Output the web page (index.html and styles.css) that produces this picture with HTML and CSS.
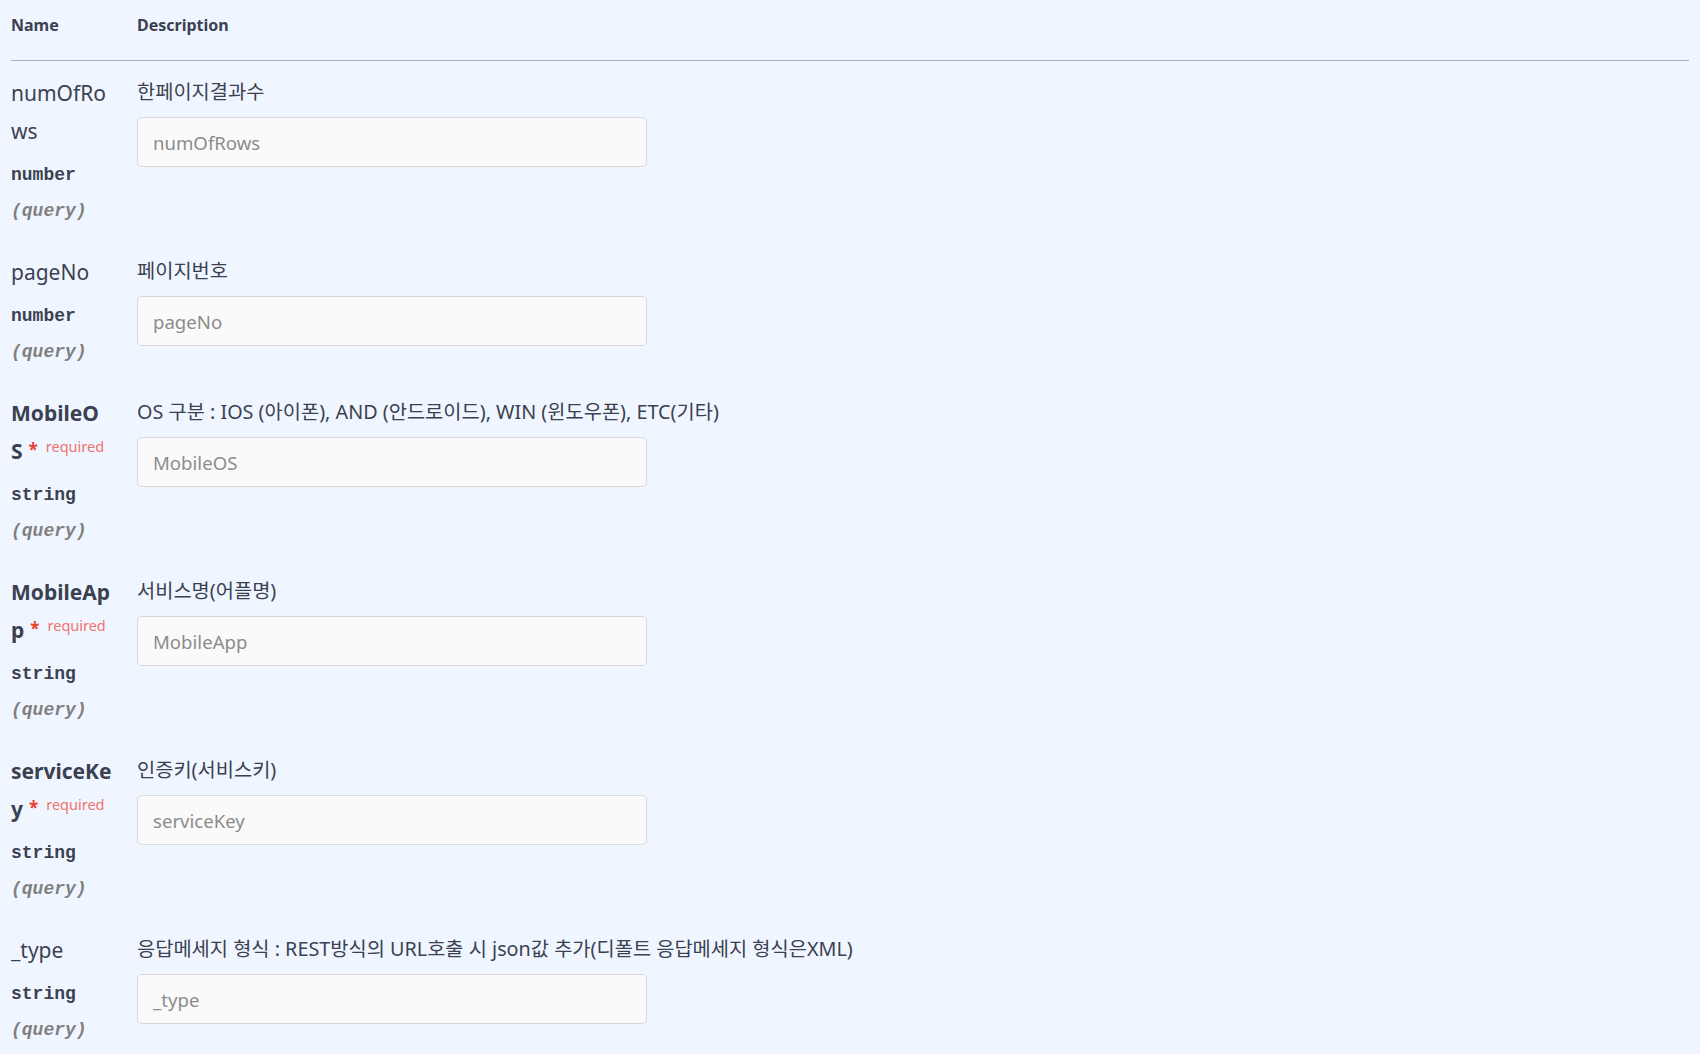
FILE: index.html
```html
<!DOCTYPE html>
<html lang="ko">
<head>
<meta charset="UTF-8">
<meta name="viewport" content="width=device-width, initial-scale=1.0">
<title>Parameters</title>
<link rel="stylesheet" href="styles.css">
</head>
<body>
<div class="parameters">
    <div class="param-head">
        <div class="col-name">Name</div>
        <div class="col-desc">Description</div>
    </div>

    <div class="param-row">
        <div class="col-name">
            <div class="param-name">numOfRo<br>ws</div>
            <div class="param-type">number</div>
            <div class="param-in">(query)</div>
        </div>
        <div class="col-desc">
            <p class="param-desc">한페이지결과수</p>
            <input type="text" class="param-input" placeholder="numOfRows">
        </div>
    </div>

    <div class="param-row">
        <div class="col-name">
            <div class="param-name">pageNo</div>
            <div class="param-type">number</div>
            <div class="param-in">(query)</div>
        </div>
        <div class="col-desc">
            <p class="param-desc">페이지번호</p>
            <input type="text" class="param-input" placeholder="pageNo">
        </div>
    </div>

    <div class="param-row">
        <div class="col-name">
            <div class="param-name required">MobileO<br>S<span class="req-star">*</span><span class="req-label">required</span></div>
            <div class="param-type">string</div>
            <div class="param-in">(query)</div>
        </div>
        <div class="col-desc">
            <p class="param-desc">OS 구분 : IOS (아이폰), AND (안드로이드), WIN (윈도우폰), ETC(기타)</p>
            <input type="text" class="param-input" placeholder="MobileOS">
        </div>
    </div>

    <div class="param-row">
        <div class="col-name">
            <div class="param-name required">MobileAp<br>p<span class="req-star">*</span><span class="req-label">required</span></div>
            <div class="param-type">string</div>
            <div class="param-in">(query)</div>
        </div>
        <div class="col-desc">
            <p class="param-desc">서비스명(어플명)</p>
            <input type="text" class="param-input" placeholder="MobileApp">
        </div>
    </div>

    <div class="param-row">
        <div class="col-name">
            <div class="param-name required">serviceKe<br>y<span class="req-star">*</span><span class="req-label">required</span></div>
            <div class="param-type">string</div>
            <div class="param-in">(query)</div>
        </div>
        <div class="col-desc">
            <p class="param-desc">인증키(서비스키)</p>
            <input type="text" class="param-input" placeholder="serviceKey">
        </div>
    </div>

    <div class="param-row">
        <div class="col-name">
            <div class="param-name">_type</div>
            <div class="param-type">string</div>
            <div class="param-in">(query)</div>
        </div>
        <div class="col-desc">
            <p class="param-desc">응답메세지 형식 : REST방식의 URL호출 시 json값 추가(디폴트 응답메세지 형식은XML)</p>
            <input type="text" class="param-input" placeholder="_type">
        </div>
    </div>
</div>
</body>
</html>
```

FILE: styles.css
```css
body {
    margin: 0;
    background: #f0f6ff;
    color: #3b4151;
    font-family: "Noto Sans", "Noto Sans CJK KR", sans-serif;
}
.parameters {
    padding: 0 11px;
}
.param-head {
    display: grid;
    grid-template-columns: 126px 1fr;
    padding: 15px 0 25px;
    border-bottom: 1px solid #adb0b8;
    font-size: 16px;
    font-weight: 700;
    line-height: 20px;
}
.param-row {
    display: grid;
    grid-template-columns: 126px 1fr;
    padding: 13px 0 14px;
}
.param-name {
    font-size: 21px;
    line-height: 38px;
}
.param-name.required {
    font-weight: 700;
}
.req-star {
    margin-left: 6px;
    color: #e8412c;
    font-size: 17px;
    line-height: 1;
    vertical-align: 3px;
}
.req-label {
    margin-left: 8px;
    color: #f0736a;
    font-size: 14.5px;
    font-weight: 400;
    line-height: 1;
    vertical-align: 7px;
}
.param-type {
    padding: 10px 0 6px;
    font-family: "Liberation Mono", monospace;
    font-size: 18px;
    font-weight: 700;
    line-height: 30px;
}
.param-in {
    color: #808080;
    font-family: "Liberation Mono", monospace;
    font-size: 18px;
    font-style: italic;
    font-weight: 700;
    line-height: 30px;
}
.param-desc {
    margin: 0;
    font-size: 19.8px;
    line-height: 35px;
}
.param-input {
    display: block;
    box-sizing: border-box;
    width: 510px;
    height: 50px;
    margin-top: 8px;
    padding: 0 15px;
    background: #fafafa;
    border: 1px solid #d9d9d9;
    border-radius: 5px;
    color: #3b4151;
    font-family: inherit;
    font-size: 18.6px;
    outline: none;
}
.param-input::placeholder {
    color: #8c8c8c;
}
```
